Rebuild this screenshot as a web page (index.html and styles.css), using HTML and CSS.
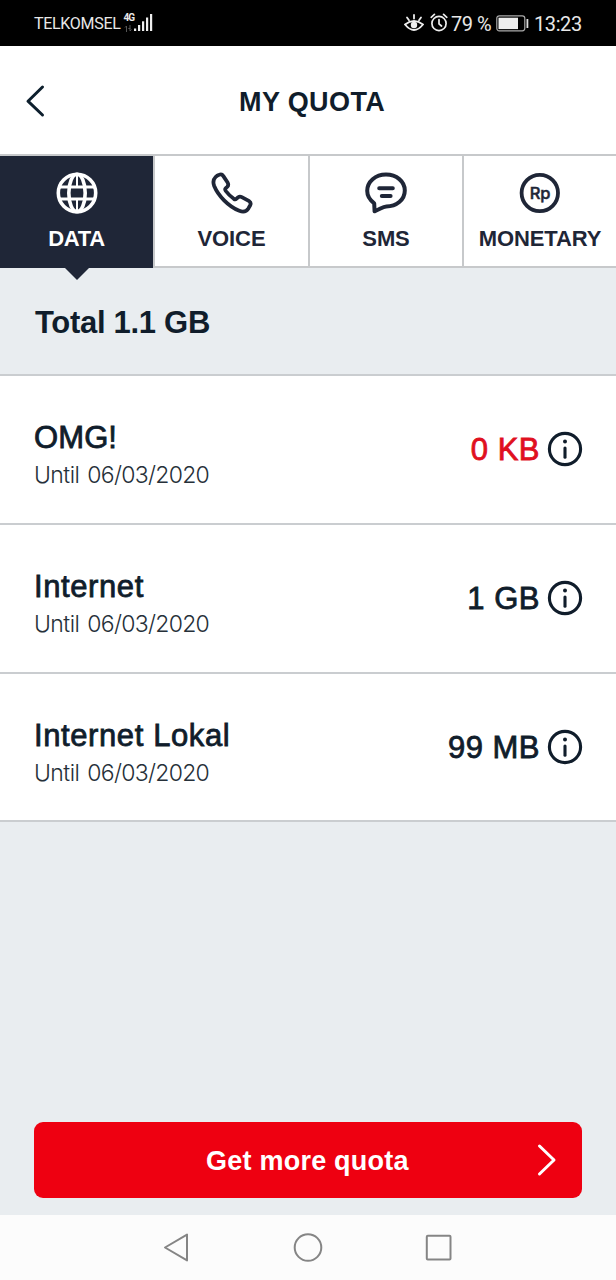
FILE: index.html
```html
<!DOCTYPE html>
<html lang="en">
<head>
<meta charset="utf-8">
<title>My Quota</title>
<link rel="stylesheet" href="styles.css">
</head>
<body>
<div class="status">
  <div class="status-left">
    <span class="carrier">TELKOMSEL</span>
    <div class="network"><span class="net-type">4G</span>
      <svg width="9" height="7" viewBox="0 0 9 7" stroke="#555" fill="none"><path d="M2.5 7V1M1 2.5L2.5 1M6 0v6M7.5 4.5L6 6M4.3 3.5h2"/></svg>
    </div>
    <svg width="19" height="19" viewBox="0 0 19 19" fill="#eee"><rect x="0" y="15.5" width="2.2" height="2.5"/><rect x="4" y="12" width="2.2" height="6"/><rect x="8" y="8.3" width="2.2" height="9.7"/><rect x="12" y="4.5" width="2.2" height="13.5"/><rect x="16" y="1" width="2.2" height="17"/></svg>
  </div>
  <div class="status-right">
    <svg class="eye" width="20" height="18" viewBox="0 0 20 18" fill="none" stroke="#eee" stroke-width="1.8" stroke-linecap="round"><path d="M1 10.5Q10 3.5 19 10.5Q10 21.5 1 10.5Z"/><circle cx="10" cy="11" r="3.2" fill="#eee" stroke="none"/><path d="M10 1v3.5M3 3.5l2 2.8M17 3.5l-2 2.8"/></svg>
    <svg class="alarm" width="18" height="19" viewBox="0 0 18 19" fill="none" stroke="#eee" stroke-width="1.7" stroke-linecap="round"><circle cx="9" cy="10.5" r="7.1"/><path d="M9 6.5v4.3l2.5 2.2M1.2 4.3L4.4 1.4M16.8 4.3l-3.2-2.9"/></svg>
    <span class="pct">79 %</span>
    <svg class="battery" width="33" height="17" viewBox="0 0 33 17"><rect x=".8" y=".8" width="28" height="15" rx="2.5" fill="none" stroke="#aaa" stroke-width="1.2"/><rect x="2.5" y="2.7" width="19.5" height="11.4" fill="#eee"/><rect x="30.5" y="4" width="1.8" height="9" fill="#ddd"/></svg>
    <span class="clock">13:23</span>
  </div>
</div>
<header class="header">
  <svg class="back" width="20" height="34" viewBox="0 0 20 34" fill="none" stroke="#0d1f2d" stroke-width="3" stroke-linecap="round" stroke-linejoin="round"><path d="M17.5 3L3 17.2L17.5 31"/></svg>
  <h1 class="title">MY QUOTA</h1>
</header>
<nav class="tabs">
  <div class="tab active">
    <svg class="tab-icon" viewBox="0 0 42 42" fill="none" stroke="#fff" stroke-width="3.6"><circle cx="21" cy="21" r="18.7"/><ellipse cx="21" cy="21" rx="8.2" ry="18.7"/><path d="M21 2v14M21 26v14" stroke-width="2"/><path d="M4 15h34M4 27h34" stroke-width="3.2"/></svg>
    <span class="tab-label data-label">DATA</span>
    <span class="pointer"></span>
  </div>
  <div class="tab">
    <svg class="tab-icon" viewBox="0 0 42 42" fill="none" stroke="#1f2637" stroke-width="3.8" stroke-linejoin="round"><path d="M8.2 2.7C10 2 11.3 2.4 12.2 3.9L16.6 10.5Q18 13.2 16.2 14.9L14.8 16.1Q13.6 17.2 14.8 19C17 22 20 24.8 22.8 26.8Q24.3 27.8 25.5 26.6L27.2 25.2Q28.8 24 30.8 25.1L38.2 29.2Q40.4 30.8 39.2 33.2L37.4 36.4Q34.4 41.2 28.3 38.8C17.2 34.2 7.2 23.7 3.2 14Q1.1 8.5 4.6 5Q6.2 3.4 8.2 2.7Z"/></svg>
    <span class="tab-label">VOICE</span>
  </div>
  <div class="tab">
    <svg class="tab-icon" viewBox="0 0 42 42" fill="none" stroke="#1f2637" stroke-width="4" stroke-linecap="round" stroke-linejoin="round"><path d="M9.6 39.3L9.2 31.3C4.5 27.8 2.2 23.5 2.2 18.8C2.2 9.5 10.5 2.5 21 2.5S39.8 9.5 39.8 18.5C39.8 28 31.3 34.5 21.3 34.5C17.8 34.5 14.2 37.8 9.6 39.3Z"/><path d="M14.2 16.3h13.6M16.8 23.9h8.8"/></svg>
    <span class="tab-label">SMS</span>
  </div>
  <div class="tab">
    <svg class="tab-icon" viewBox="0 0 42 42" fill="none" stroke="#1f2637" stroke-width="3.8"><circle cx="20.8" cy="21" r="18.2"/><text class="rp" x="20.9" y="27" text-anchor="middle">Rp</text></svg>
    <span class="tab-label monetary">MONETARY</span>
  </div>
</nav>
<main class="content">
  <h2 class="total">Total 1.1 GB</h2>
  <section class="row">
    <div class="info"><div class="name omg">OMG!</div><div class="until">Until <span>06/03/2020</span></div></div>
    <div class="amount red">0 KB</div>
    <svg class="info-icon" viewBox="0 0 36 36"><circle cx="18" cy="18" r="15.6"/><path d="M18 17v9.2"/><circle class="dot" cx="18" cy="10.6" r="2"/></svg>
  </section>
  <section class="row">
    <div class="info"><div class="name internet">Internet</div><div class="until">Until <span>06/03/2020</span></div></div>
    <div class="amount">1 GB</div>
    <svg class="info-icon" viewBox="0 0 36 36"><circle cx="18" cy="18" r="15.6"/><path d="M18 17v9.2"/><circle class="dot" cx="18" cy="10.6" r="2"/></svg>
  </section>
  <section class="row">
    <div class="info"><div class="name">Internet Lokal</div><div class="until">Until <span>06/03/2020</span></div></div>
    <div class="amount">99 MB</div>
    <svg class="info-icon" viewBox="0 0 36 36"><circle cx="18" cy="18" r="15.6"/><path d="M18 17v9.2"/><circle class="dot" cx="18" cy="10.6" r="2"/></svg>
  </section>
</main>
<div class="cta-wrap">
  <div class="cta"><span class="cta-label">Get more quota</span>
    <svg class="cta-arrow" width="20" height="34" viewBox="0 0 20 34" fill="none" stroke="#fff" stroke-width="3" stroke-linecap="round" stroke-linejoin="round"><path d="M2.5 3L17 17L2.5 31"/></svg>
  </div>
</div>
<footer class="sysnav">
  <svg width="616" height="65" viewBox="0 0 616 65" fill="none" stroke="#858585" stroke-width="2" stroke-linejoin="round"><path d="M187 19.6V45.4L165 32.5Z"/><circle cx="308" cy="32.5" r="13.3"/><rect x="426.8" y="20.7" width="23.7" height="23.8" rx="1"/></svg>
</footer>
</body>
</html>
```

FILE: styles.css
```css
* { box-sizing: border-box; }
body {
  margin: 0; width: 616px; height: 1280px; overflow: hidden;
  display: flex; flex-direction: column;
  background: #e9edf0; color: #101d2b;
  font-family: "Liberation Sans", Arial, sans-serif;
}
svg { display: block; flex: none; }
h1, h2 { margin: 0; }
.status {
  height: 46px; background: #000; color: #e8e8e8;
  display: flex; justify-content: space-between; align-items: flex-start;
  padding: 0 34px; font-family: Roboto, sans-serif; white-space: nowrap;
}
.status-left, .status-right { display: flex; align-items: flex-start; }
.carrier { font-size: 16px; line-height: 20px; margin-top: 14px; width: 89.5px; letter-spacing: -0.3px; }
.network { width: 10.5px; margin-top: 13px; }
.net-type { display: block; font-size: 10px; line-height: 10px; font-weight: 700; letter-spacing: -1px; margin-bottom: 2px; }
.status-left > svg { margin-top: 13px; }
.eye { margin-top: 14px; margin-right: 6px; }
.alarm { margin-top: 13px; margin-right: 3px; }
.pct, .clock { font-size: 20px; line-height: 24px; margin-top: 12px; }
.pct { width: 45px; letter-spacing: -0.5px; }
.battery { margin-top: 15px; margin-right: 5px; }
.clock { width: 48px; letter-spacing: -0.4px; }
.header { height: 108px; display: flex; background: #fff; padding-left: 25px; }
.back { margin-top: 38px; }
.title { font-size: 27px; line-height: 32px; margin: 40px 0 0 194px; letter-spacing: 0.4px; white-space: nowrap; }
.tabs {
  height: 114px; display: grid; grid-template-columns: 153px 155px 154px 154px;
  border-top: 2px solid #c7c9cb; color: #1f2637;
}
.tab {
  position: relative; display: flex; flex-direction: column; align-items: center;
  padding-top: 16px; background: #fff; border-bottom: 2px solid #c7c9cb;
}
.tab + .tab { border-left: 2px solid #c7c9cb; }
.tab.active { background: #1f2637; color: #fff; border-bottom-color: #1f2637; }
.tab-icon { width: 42px; height: 42px; }
.tab-label { font-weight: 700; font-size: 22px; line-height: 26px; margin-top: 12px; white-space: nowrap; letter-spacing: -.1px; }
.pointer {
  position: absolute; top: 112px; left: 65px; width: 24px; height: 12px;
  background: #1f2637; clip-path: polygon(0 0, 100% 0, 50% 100%); z-index: 1;
}
.data-label { letter-spacing: -.3px; }
.rp { font: 500 16.5px Inter, sans-serif; fill: #1f2637; stroke: #1f2637; stroke-width: .5px; letter-spacing: -.4px; }
.total { height: 106px; padding: 37px 34px 0 35px; font-size: 31px; line-height: 36px; letter-spacing: -.3px; }
.row {
  height: 149px; display: flex; background: #fff; border-top: 2px solid #cacdd0; padding: 0 33px 0 34px;
}
.row:last-child { border-bottom: 2px solid #cacdd0; height: 150px; }
.info { flex: 1; white-space: nowrap; }
.name, .amount { font-size: 31px; line-height: 36px; -webkit-text-stroke: .8px currentColor; }
.name { margin-top: 44px; letter-spacing: .6px; }
.omg { letter-spacing: .1px; }
.until { font: 300 23px/28px Inter, "Liberation Sans", sans-serif; margin-top: 5px; letter-spacing: -.55px; word-spacing: 2px; color: #263039; }
.until span { letter-spacing: -.7px; }
.amount { margin-top: 56px; margin-right: 7px; white-space: nowrap; letter-spacing: .5px; }
.red { color: #e0101f; }
.info-icon { width: 36px; height: 36px; margin-top: 55px; fill: none; stroke: #101d2b; stroke-width: 3.1; stroke-linecap: round; }
.info-icon .dot { fill: #101d2b; stroke: none; }
.cta-wrap { margin-top: auto; height: 93px; padding: 0 34px; }
.cta {
  height: 76px; border-radius: 9px; background: #ee0011; color: #fff;
  display: flex; justify-content: space-between; padding: 0 25px 0 172px;
}
.cta-label { font-weight: 700; font-size: 27px; line-height: 32px; margin-top: 23px; white-space: nowrap; letter-spacing: .23px; }
.cta-arrow { margin-top: 21px; }
.sysnav { height: 65px; background: #fcfcfc; }
```
